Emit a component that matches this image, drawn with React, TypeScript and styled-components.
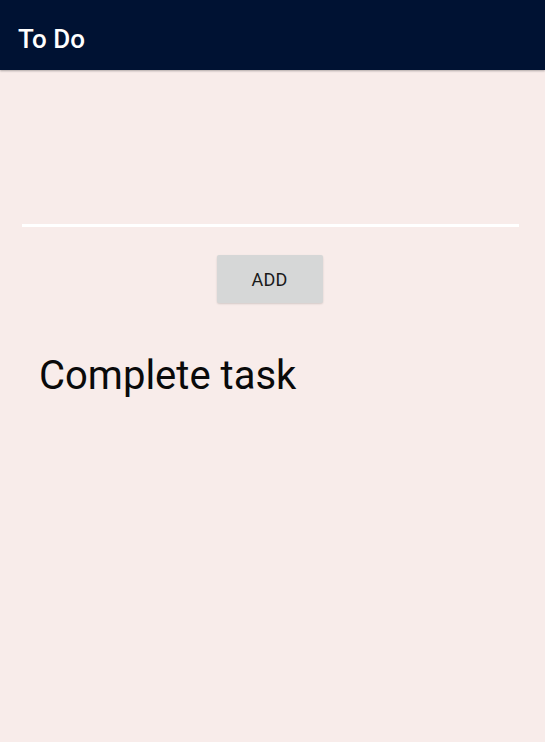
import React from "react";
import styled, { createGlobalStyle } from "styled-components";

const Global = createGlobalStyle`
  html, body { margin: 0; padding: 0; background: #f8ecea; }
  body { font-family: Roboto, "Noto Sans", sans-serif; }
`;

const Page = styled.div`
  width: 545px;
  height: 742px;
  background: #f8ecea;
  display: flex;
  flex-direction: column;
`;

const Toolbar = styled.header`
  height: 70px;
  box-sizing: border-box;
  padding-top: 7px;
  background: #001233;
  display: flex;
  align-items: center;
  padding-left: 18px;
  box-shadow: 0 1px 2px rgba(0,0,0,0.3);
`;

const Title = styled.h1`
  margin: 0;
  color: #ffffff;
  font-size: 26px;
  font-weight: 500;
  font-family: Roboto, sans-serif;
`;

const Content = styled.main`
  display: flex;
  flex-direction: column;
  padding: 0 26px 0 22px;
`;

const Input = styled.input`
  margin-top: 130px;
  height: 24px;
  border: none;
  border-bottom: 3px solid #ffffff;
  background: transparent;
  outline: none;
  padding: 0;
  font-size: 18px;
  font-family: Roboto, sans-serif;
`;

const AddButton = styled.button`
  align-self: center;
  margin-top: 28px;
  margin-left: -2px;
  width: 106px;
  height: 48px;
  border: none;
  border-radius: 2px;
  background: #d6d7d7;
  color: #1a1a1a;
  font-family: Roboto, sans-serif;
  font-size: 18px;
  font-weight: 400;
  letter-spacing: 0.2px;
  box-shadow: 0 1px 2px rgba(0,0,0,0.15);
`;

const Task = styled.div`
  margin-top: 49px;
  padding-left: 17px;
  font-size: 40px;
  color: #0a0a0a;
  font-family: Roboto, sans-serif;
`;

export default function App() {
  return (
    <Page>
      <Global />
      <Toolbar>
        <Title>To Do</Title>
      </Toolbar>
      <Content>
        <Input />
        <AddButton>ADD</AddButton>
        <Task>Complete task</Task>
      </Content>
    </Page>
  );
}
